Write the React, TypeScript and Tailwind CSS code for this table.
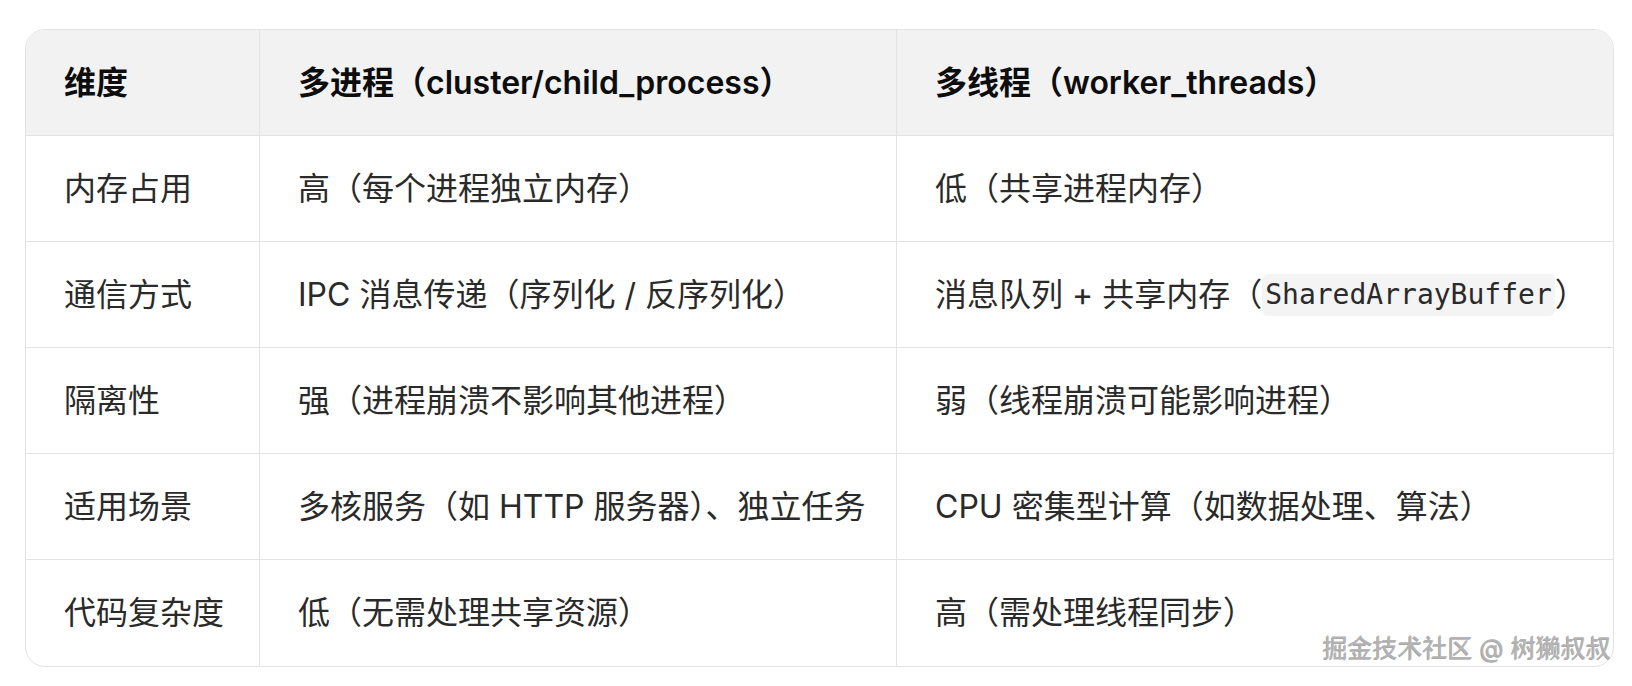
import React from "react";

const rows: { k: string; a: React.ReactNode; b: React.ReactNode }[] = [
  { k: "内存占用", a: "高（每个进程独立内存）", b: "低（共享进程内存）" },
  {
    k: "通信方式",
    a: "IPC 消息传递（序列化 / 反序列化）",
    b: (
      <>
        消息队列 + 共享内存（
        <code className="font-['DejaVu_Sans_Mono','Liberation_Mono',monospace] text-[28px] leading-[36px] bg-[#f4f4f4] rounded-[6px] px-[3px] py-[3px]">
          SharedArrayBuffer
        </code>
        ）
      </>
    ),
  },
  { k: "隔离性", a: "强（进程崩溃不影响其他进程）", b: "弱（线程崩溃可能影响进程）" },
  { k: "适用场景", a: "多核服务（如 HTTP 服务器）、独立任务", b: "CPU 密集型计算（如数据处理、算法）" },
  { k: "代码复杂度", a: "低（无需处理共享资源）", b: "高（需处理线程同步）" },
];

export default function App() {
  return (
    <div className="w-[1632px] h-[686px] bg-white pt-[29px] pl-[25px] font-['Inter','Noto_Sans_CJK_SC',sans-serif]">
      <div className="relative w-[1589px]">
        <div className="border border-[#e3e3e3] rounded-[20px] overflow-hidden">
          <div className="grid grid-cols-[234px_637px_1fr] h-[106px] bg-[#f2f2f2] border-b border-[#e3e3e3] text-[32px] font-semibold text-[#0d0d0d]">
            <div className="flex items-center px-[38px] border-r border-[#e3e3e3]">维度</div>
            <div className="flex items-center px-[38px] border-r border-[#e3e3e3]">多进程（cluster/child_process）</div>
            <div className="flex items-center px-[38px]">多线程（worker_threads）</div>
          </div>
          {rows.map((r, i) => (
            <div
              key={r.k}
              className={
                "grid grid-cols-[234px_637px_1fr] h-[106px] text-[32px] text-[#2a2a2a] " +
                (i < rows.length - 1 ? "border-b border-[#e3e3e3]" : "")
              }
            >
              <div className="flex items-center px-[38px] border-r border-[#e3e3e3] whitespace-nowrap">{r.k}</div>
              <div className="flex items-center px-[38px] border-r border-[#e3e3e3] whitespace-nowrap">{r.a}</div>
              <div className="flex items-center px-[38px] whitespace-nowrap">{r.b}</div>
            </div>
          ))}
        </div>
        <div className="absolute right-[3px] bottom-[0px] text-[25px] font-normal text-[#b4b4b4] [text-shadow:-1px_1px_0_rgba(0,0,0,0.35)] whitespace-nowrap">
          掘金技术社区 @ 树獭叔叔
        </div>
      </div>
    </div>
  );
}
